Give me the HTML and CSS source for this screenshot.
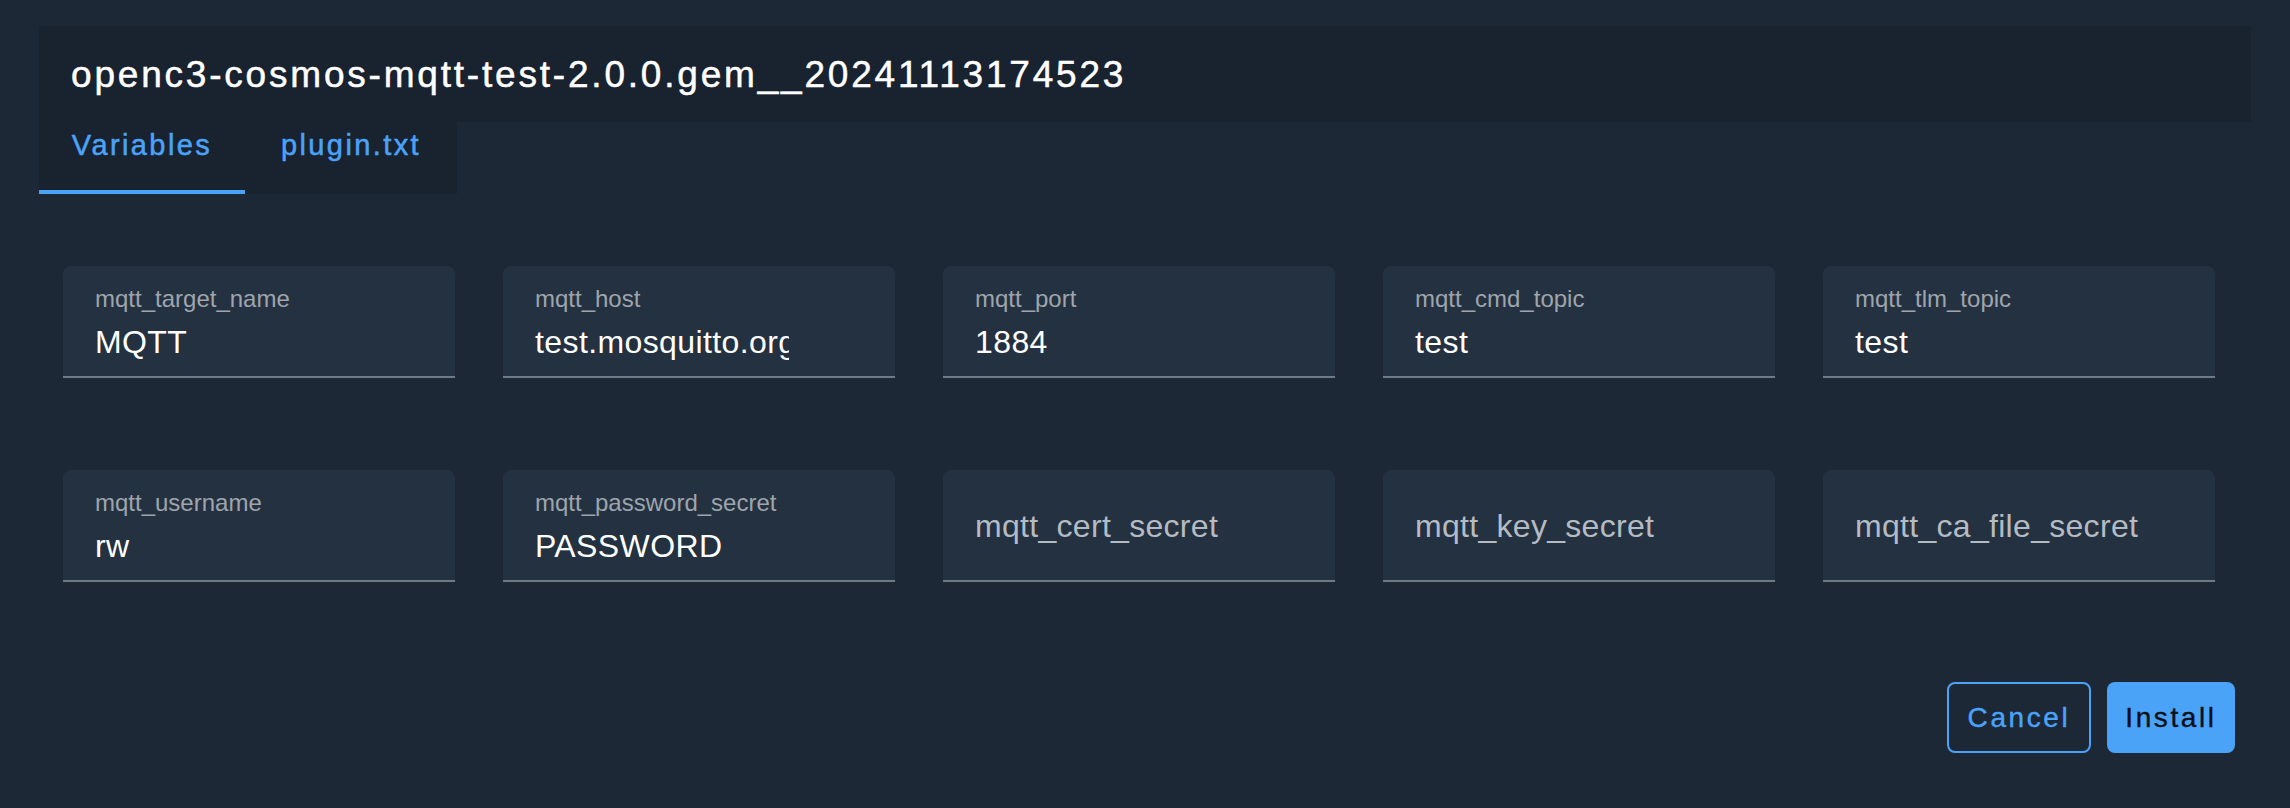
FILE: index.html
```html
<!DOCTYPE html>
<html lang="en">
<head>
<meta charset="utf-8">
<title>Plugin Variables</title>
<link rel="stylesheet" href="styles.css">
</head>
<body>
<div class="dialog">
  <div class="header">
    <div class="title">openc3-cosmos-mqtt-test-2.0.0.gem__20241113174523</div>
  </div>
  <div class="tabs">
    <div class="tab tab-active">Variables</div>
    <div class="tab">plugin.txt</div>
  </div>
  <div class="form">
    <div class="field">
      <div class="label">mqtt_target_name</div>
      <div class="value">MQTT</div>
    </div>
    <div class="field">
      <div class="label">mqtt_host</div>
      <div class="value value-clip">test.mosquitto.org</div>
    </div>
    <div class="field">
      <div class="label">mqtt_port</div>
      <div class="value">1884</div>
    </div>
    <div class="field">
      <div class="label">mqtt_cmd_topic</div>
      <div class="value">test</div>
    </div>
    <div class="field">
      <div class="label">mqtt_tlm_topic</div>
      <div class="value">test</div>
    </div>
    <div class="field">
      <div class="label">mqtt_username</div>
      <div class="value">rw</div>
    </div>
    <div class="field">
      <div class="label">mqtt_password_secret</div>
      <div class="value">PASSWORD</div>
    </div>
    <div class="field field-empty">
      <div class="placeholder">mqtt_cert_secret</div>
    </div>
    <div class="field field-empty">
      <div class="placeholder">mqtt_key_secret</div>
    </div>
    <div class="field field-empty">
      <div class="placeholder">mqtt_ca_file_secret</div>
    </div>
  </div>
  <div class="actions">
    <button class="btn btn-outline">Cancel</button>
    <button class="btn btn-primary">Install</button>
  </div>
</div>
</body>
</html>
```

FILE: styles.css
```css
html, body {
  margin: 0;
  padding: 0;
}
body {
  background: #1c2836;
  font-family: "Liberation Sans", Arial, sans-serif;
  width: 2290px;
  height: 808px;
  overflow: hidden;
}
.dialog {
  margin: 26px 39px 0 39px;
  width: 2212px;
}
.header {
  height: 96px;
  box-sizing: border-box;
  background: #19222f;
  padding: 30px 32px 0 32px;
}
.title {
  color: #ffffff;
  font-size: 37px;
  line-height: 37px;
  letter-spacing: 2.8px;
  white-space: nowrap;
  -webkit-text-stroke: 0.5px #ffffff;
}
.tabs {
  display: flex;
  width: 418px;
  background: #19222f;
}
.tab {
  height: 72px;
  box-sizing: border-box;
  padding-top: 9px;
  text-align: center;
  color: #4ba3f8;
  font-size: 29px;
  line-height: 29px;
  letter-spacing: 2.4px;
  border-bottom: 4px solid transparent;
  -webkit-text-stroke: 0.5px #4ba3f8;
}
.tab:first-child {
  width: 206px;
}
.tab:nth-child(2) {
  width: 212px;
}
.tab-active {
  border-bottom-color: #4ba3f8;
}
.form {
  display: grid;
  grid-template-columns: repeat(5, 392px);
  column-gap: 48px;
  row-gap: 92px;
  padding: 72px 0 0 24px;
}
.field {
  height: 112px;
  box-sizing: border-box;
  background: #243140;
  border-radius: 8px 8px 0 0;
  border-bottom: 2px solid #6f7a86;
  padding: 21px 32px 0 32px;
}
.label {
  color: #9ea5ad;
  font-size: 24px;
  line-height: 24px;
  white-space: nowrap;
}
.value {
  margin-top: 12px;
  color: #ffffff;
  font-size: 32px;
  line-height: 38px;
  letter-spacing: 0.4px;
  white-space: nowrap;
}
.value-clip {
  width: 254px;
  overflow: hidden;
}
.field-empty {
  padding-top: 40px;
}
.placeholder {
  color: #b5bbc2;
  font-size: 32px;
  line-height: 32px;
  letter-spacing: 0.3px;
  white-space: nowrap;
}
.actions {
  display: flex;
  justify-content: flex-end;
  gap: 16px;
  padding-right: 16px;
  margin-top: 100px;
}
.btn {
  height: 71px;
  box-sizing: border-box;
  border-radius: 8px;
  font-family: "Liberation Sans", Arial, sans-serif;
  font-size: 28px;
  letter-spacing: 2.6px;
  padding: 0;
  cursor: pointer;
}
.btn-outline {
  width: 144px;
  background: transparent;
  border: 2px solid #4ba3f8;
  color: #4ba3f8;
  -webkit-text-stroke: 0.4px #4ba3f8;
}
.btn-primary {
  width: 128px;
  background: #4ba3f8;
  border: none;
  color: #0b1119;
  -webkit-text-stroke: 0.4px #0b1119;
}
```
